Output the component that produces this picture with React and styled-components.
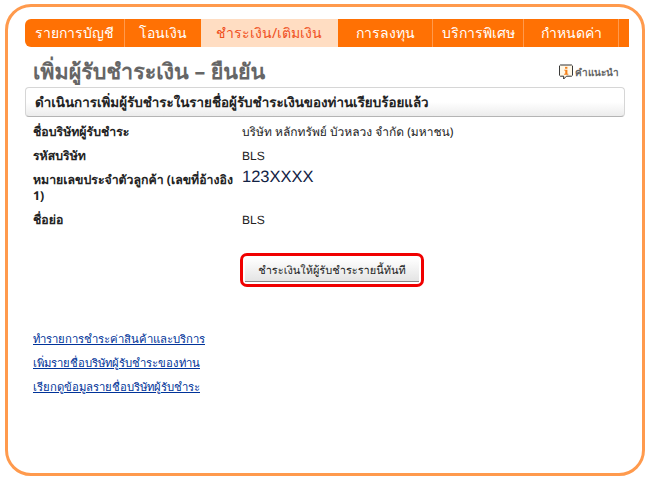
import React from 'react'
import styled, { createGlobalStyle } from 'styled-components'

const Global = createGlobalStyle`
  html, body { margin: 0; padding: 0; background: #fff; }
  body {
    font-family: Tahoma, "Noto Sans", "DejaVu Sans", "Liberation Sans", sans-serif;
  }
`

const Frame = styled.div`
  box-sizing: border-box;
  width: 640px;
  height: 472px;
  margin: 4px 0 0 5px;
  border: 3px solid #ff9a4d;
  border-radius: 26px;
  padding: 12px 14px 0 17px;
`

const Tabs = styled.nav`
  display: flex;
  width: 604px;
  height: 28px;
  background: #ff7104;
  border-radius: 6px 0 0 6px;
  overflow: hidden;
`

const Tab = styled.a`
  box-sizing: border-box;
  width: ${p => p.$w}px;
  display: flex;
  align-items: center;
  justify-content: center;
  font-size: 14px;
  color: ${p => (p.$active ? '#f0501e' : '#fff')};
  background: ${p => (p.$active ? '#ffddc2' : 'transparent')};
  border-right: 1px solid ${p => (p.$active || p.$plain ? 'transparent' : '#ff9a4d')};
`

const TitleRow = styled.div`
  display: flex;
  align-items: center;
  justify-content: space-between;
  height: 40px;
  padding: 10px 6px 0 8px;
  width: 600px;
  box-sizing: border-box;
`

const Title = styled.h1`
  margin: 0;
  font-size: 21.5px;
  font-weight: bold;
  color: #666;
  text-rendering: geometricPrecision;
`

const Help = styled.a`
  display: flex;
  align-items: center;
  gap: 2px;
  font-size: 10px;
  font-weight: bold;
  color: #666;
`

const Banner = styled.div`
  box-sizing: border-box;
  width: 600px;
  height: 30px;
  display: flex;
  align-items: center;
  padding-left: 9px;
  border: 1px solid #d6d6d6;
  border-bottom-color: #b4b4b4;
  border-radius: 4px;
  background: linear-gradient(#fff 50%, #ececec);
  font-size: 13.4px;
  font-weight: bold;
  color: #222;
  text-rendering: geometricPrecision;
`

const Details = styled.div`
  display: grid;
  grid-template-columns: 209px 1fr;
  row-gap: 8px;
  margin-top: 7px;
  padding-left: 8px;
  color: #222;
  line-height: 16px;
  text-rendering: geometricPrecision;
`

const Label = styled.div`
  font-size: 12.3px;
  font-weight: bold;
  min-height: 16px;
  white-space: nowrap;
`

const Value = styled.div`
  font-size: ${p => (p.$big ? '16.5px' : '12px')};
  line-height: ${p => (p.$big ? '10px' : '16px')};
  color: ${p => (p.$big ? '#112244' : '#222')};
  font-family: ${p => (p.$latin ? '"Liberation Sans", Arial, sans-serif' : 'inherit')};
`

const Actions = styled.div`
  display: flex;
  margin: 25px 0 0 215px;
`

const Outline = styled.div`
  box-sizing: border-box;
  width: 184px;
  height: 34px;
  padding: 2px;
  border: 3px solid #f00000;
  border-radius: 7px;
`

const Pay = styled.button`
  display: block;
  width: 100%;
  height: 100%;
  padding: 0;
  border: 0;
  border-bottom: 1px solid #888;
  background: linear-gradient(#fff, #e4e4e4);
  font: inherit;
  font-size: 11px;
  color: #222;
  text-rendering: geometricPrecision;
`

const Links = styled.div`
  display: flex;
  flex-direction: column;
  gap: 8px;
  margin: 44px 0 0 8px;
`

const Item = styled.a`
  font-size: 11.3px;
  line-height: 16px;
  color: #003399;
  text-decoration: underline;
`

function InfoIcon() {
  return (
    <svg width="14" height="16" viewBox="0 0 15 16">
      <path d="M1.5 .5h12l1 1v10l-1 1H8l-3 3v-3H1.5l-1-1v-10z" fill="#fff8e8" stroke="#222" />
      <rect x="6.5" y="2.5" width="2.5" height="2" fill="#f57f17" />
      <path d="M5.5 5.5H9v4.5h1v1H5.5v-1h1.2V6.5H5.5z" fill="#f57f17" />
    </svg>
  )
}

export default function App() {
  return (
    <>
      <Global />
      <Frame>
        <Tabs>
          <Tab $w={100}>รายการบัญชี</Tab>
          <Tab $w={76} $plain>โอนเงิน</Tab>
          <Tab $w={137} $active>ชำระเงิน/เติมเงิน</Tab>
          <Tab $w={95}>การลงทุน</Tab>
          <Tab $w={91}>บริการพิเศษ</Tab>
          <Tab $w={95}>กำหนดค่า</Tab>
        </Tabs>
        <TitleRow>
          <Title>เพิ่มผู้รับชำระเงิน – ยืนยัน</Title>
          <Help><InfoIcon />คำแนะนำ</Help>
        </TitleRow>
        <Banner>ดำเนินการเพิ่มผู้รับชำระในรายชื่อผู้รับชำระเงินของท่านเรียบร้อยแล้ว</Banner>
        <Details>
          <Label>ชื่อบริษัทผู้รับชำระ</Label>
          <Value>บริษัท หลักทรัพย์ บัวหลวง จำกัด (มหาชน)</Value>
          <Label>รหัสบริษัท</Label>
          <Value $latin>BLS</Value>
          <Label>หมายเลขประจำตัวลูกค้า (เลขที่อ้างอิง<br />1)</Label>
          <Value $big $latin>123XXXX</Value>
          <Label>ชื่อย่อ</Label>
          <Value $latin>BLS</Value>
        </Details>
        <Actions>
          <Outline><Pay>ชำระเงินให้ผู้รับชำระรายนี้ทันที</Pay></Outline>
        </Actions>
        <Links>
          <Item href="#">ทำรายการชำระค่าสินค้าและบริการ</Item>
          <Item href="#">เพิ่มรายชื่อบริษัทผู้รับชำระของท่าน</Item>
          <Item href="#">เรียกดูข้อมูลรายชื่อบริษัทผู้รับชำระ</Item>
        </Links>
      </Frame>
    </>
  )
}
